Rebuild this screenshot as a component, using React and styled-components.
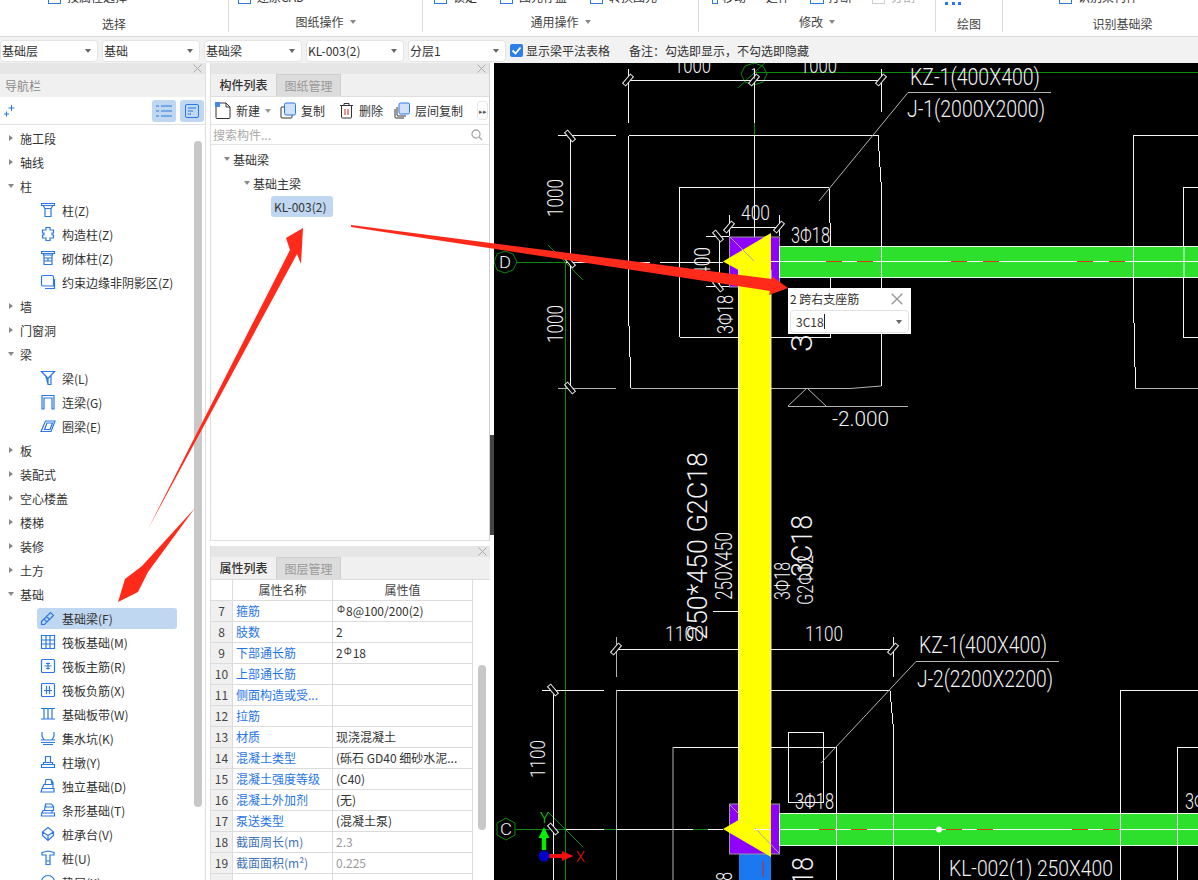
import styled, { createGlobalStyle } from 'styled-components'

const FONT = '"Noto Sans CJK SC", "Noto Sans", sans-serif'
const BLUE = '#2a78e4'

const GlobalStyle = createGlobalStyle`
  html, body {
    margin: 0;
    padding: 0;
    background: #fff;
    overflow: hidden;
  }
  * {
    box-sizing: border-box;
  }
`

/* ---------- small drawings ---------- */

const IconSvg = styled.svg`
  flex: none;
  display: block;
  fill: none;
  stroke: ${(p) => p.$color || BLUE};
  stroke-width: 1.2;
`

const NAV_ICONS = {
  column: 'M1.5 1.5h13v2h-13zM3 3.5l2 3h6l2-3M5 6.5v8h6v-8',
  structural: 'M6 1.5h4v2.5h3.5v3h-1.5v2h1.5v3H10v2.5H6V12H2.500V9H4V7H2.500V4H6z',
  masonry: 'M1.5 1.500h13v2h-13zM3.500 3.500v1.500h9V3.500M4 5v9.500h8V5M4 8h8M4 11h8M8 8v3',
  edge: 'M3 1.500h9a1.500 1.500 0 0 1 1.500 1.500v9H3A1.500 1.500 0 0 1 1.500 10.500V3A1.500 1.500 0 0 1 3 1.500zM14.500 5v9.500H5',
  beam: 'M1.500 1.500h13L8 8.500zM8 8.500v6h3V5M5.500 5l2.500 9',
  link: 'M2 15V1.500h12V15h-2V4H4v11z',
  ring: 'M5.500 3h9.500l-4 10.500H1zM7 5h5.500l-2.500 6.500H4.500z',
  found: 'M1.500 11.500L10.500 2.500l3 3-9 9h-3zM4 9l3 3M6.500 6.500l3 3',
  raft: 'M1.500 1.500h13v13h-13zM1.500 6h13M1.500 10h13M6 1.500v13M10 1.500v13',
  main: 'M2.500 1.500h11a1 1 0 0 1 1 1v11a1 1 0 0 1-1 1h-11a1 1 0 0 1-1-1v-11a1 1 0 0 1 1-1zM8 4.500v7M4.500 8h7M6 5.500h4M6 10.500h4',
  minus: 'M2.500 1.500h11a1 1 0 0 1 1 1v11a1 1 0 0 1-1 1h-11a1 1 0 0 1-1-1v-11a1 1 0 0 1 1-1zM6.500 4v8M9.500 4v8M4 8.500h8',
  strip: 'M1 2.500h14M1 13h14M4 2.500V13M8 2.500V13M12 2.500V13',
  pit: 'M2 2v4l2 4h8l2-4V2M1 12.500h14M3 14.500h10M1 10h3M12 10h3',
  pier: 'M5.500 2.500h5v6h-5zM3.500 8.500h9v2h-9zM1.500 10.500h13v3h-13z',
  isolated: 'M6 1.500h5l1 5H5zM4 6.500h9v4H2zM2 10.500h12v3.500H1zM11 1.500l2 3v2',
  stripF: 'M5.500 2h6l2 2.500v4h-9zM5.500 2v3h8M3 8.500h9v2.500H2zM1.500 11h13v3h-13z',
  cap: 'M8 1.500l5.500 4.500v3.500L8 14.500 2.500 9.500V6zM2.500 6L8 9.500 13.500 6M8 9.500v5',
  pile: 'M2 2.500L8 1l6 1.500v2.500H10v9.500H6V5H2zM6 11h4',
  cushion: 'M1.500 8a6.500 6.500 0 0 1 13 0v6h-13z'
}

function NavIcon({ name }) {
  return (
    <IconSvg width="16" height="16" viewBox="0 0 16 16">
      <path d={NAV_ICONS[name]} />
    </IconSvg>
  )
}

function Check() {
  return (
    <svg width="13" height="13" viewBox="0 0 13 13">
      <rect width="13" height="13" rx="2" fill="#2f80e6" />
      <path d="M2.500 6.500l3 3 5-6" stroke="#fff" strokeWidth="1.800" fill="none" />
    </svg>
  )
}

function NewIcon() {
  return (
    <svg width="16" height="17" viewBox="0 0 16 17" fill="none" stroke="#333">
      <path d="M1 5v10.500a1 1 0 0 0 1 1h12a1 1 0 0 0 1-1V5l-4-4H5" />
      <path d="M11 1v4h4" />
      <rect x="0" y="0" width="5" height="5" fill="#3f8ae8" stroke="none" />
    </svg>
  )
}

function CopyIcon() {
  return (
    <svg width="16" height="17" viewBox="0 0 16 17" fill="none" stroke="#333">
      <path d="M4 5H2a1 1 0 0 0-1 1v9a1 1 0 0 0 1 1h9a1 1 0 0 0 1-1v-2" />
      <rect x="4.500" y="1" width="11" height="12" rx="1.500" fill="#cfe2fa" stroke="#2a78e4" />
    </svg>
  )
}

function TrashIcon() {
  return (
    <svg width="15" height="17" viewBox="0 0 15 17" fill="none" stroke="#333">
      <path d="M1 3.500h13M5 3.500V1.500h5v2M2.500 3.500v11.500a1 1 0 0 0 1 1h8a1 1 0 0 0 1-1V3.500" />
      <path d="M6 7v6M9 7v6" stroke="#e02020" />
    </svg>
  )
}

function FloorCopyIcon() {
  return (
    <svg width="16" height="17" viewBox="0 0 16 17" fill="none" stroke="#333">
      <path d="M1 7v8a1 1 0 0 0 1 1h8M3 5v8a1 1 0 0 0 1 1h8" />
      <rect x="5" y="1" width="10.500" height="11" rx="1.500" fill="#cfe2fa" stroke="#2a78e4" />
    </svg>
  )
}

function SearchIcon() {
  return (
    <svg width="12" height="12" viewBox="0 0 12 12" fill="none" stroke="#aaa" strokeWidth="1.300">
      <circle cx="5" cy="5" r="4" />
      <path d="M8 8l3 3" />
    </svg>
  )
}

function CloseX({ size = 9, color = '#aaa' }) {
  return (
    <svg width={size} height={size} viewBox="0 0 9 9" stroke={color} fill="none">
      <path d="M0.500 0.500l8 8M8.500 0.500l-8 8" />
    </svg>
  )
}

/* ---------- ribbon ---------- */

const Ribbon = styled.div`
  display: flex;
  height: 37px;
  background: #fff;
  border-bottom: 1px solid #d9d9d9;
`

const RibbonGroup = styled.div`
  width: ${(p) => p.$w}px;
  height: 32px;
  border-right: ${(p) => (p.$last ? 'none' : '1px solid #dcdcdc')};
  display: flex;
  flex-direction: column;
`

const RibbonTop = styled.div`
  height: 5px;
  overflow: hidden;
  display: flex;
  align-items: flex-end;
  padding-left: ${(p) => p.$pad}px;
  gap: ${(p) => p.$gap || 0}px;
`

const RibbonItem = styled.div`
  display: flex;
  align-items: center;
  gap: ${(p) => (p.$tight ? 4 : 6)}px;
  font-size: 12px;
  line-height: 16px;
  color: ${(p) => (p.$off ? '#aaa' : '#333')};
  white-space: nowrap;
`

const RibbonGlyph = styled.span`
  width: ${(p) => p.$w || 13}px;
  height: 14px;
  border: 1px solid ${(p) => (p.$off ? '#ccc' : BLUE)};
  display: block;
`

const DrawDots = styled.span`
  width: 16px;
  height: 14px;
  display: block;
  border-bottom: 3px dotted ${BLUE};
`

const RibbonLabel = styled.div`
  margin-top: ${(p) => (p.$raise ? 8 : 10)}px;
  padding-left: ${(p) => p.$shift || 0}px;
  text-align: center;
  font-size: 12px;
  line-height: 17px;
  color: #444;
  display: flex;
  justify-content: center;
  align-items: center;
  gap: 6px;
`

const Caret = styled.span`
  width: 0;
  height: 0;
  border-left: 3.500px solid transparent;
  border-right: 3.500px solid transparent;
  border-top: 4px solid ${(p) => p.$color || '#888'};
  display: block;
  flex: none;
`

function RibbonBar() {
  return (
    <Ribbon>
      <RibbonGroup $w={229}>
        <RibbonTop $pad={48}>
          <RibbonItem><RibbonGlyph /><span>按属性选择</span></RibbonItem>
        </RibbonTop>
        <RibbonLabel>选择</RibbonLabel>
      </RibbonGroup>
      <RibbonGroup $w={194}>
        <RibbonTop $pad={9}>
          <RibbonItem><RibbonGlyph /><span>还原CAD</span></RibbonItem>
        </RibbonTop>
        <RibbonLabel $raise>图纸操作 <Caret /></RibbonLabel>
      </RibbonGroup>
      <RibbonGroup $w={276}>
        <RibbonTop $pad={11} $gap={23}>
          <RibbonItem><RibbonGlyph /><span>锁定</span></RibbonItem>
          <RibbonItem><RibbonGlyph /><span>图元存盘</span></RibbonItem>
          <RibbonItem><RibbonGlyph /><span>转换图元</span></RibbonItem>
        </RibbonTop>
        <RibbonLabel $raise>通用操作 <Caret /></RibbonLabel>
      </RibbonGroup>
      <RibbonGroup $w={237}>
        <RibbonTop $pad={13} $gap={20}>
          <RibbonItem $tight><RibbonGlyph $w={6} /><span>移动</span></RibbonItem>
          <RibbonItem><span>延伸</span></RibbonItem>
          <RibbonItem $tight><RibbonGlyph $w={14} /><span>打断</span></RibbonItem>
          <RibbonItem $off><RibbonGlyph $off /><span>分割</span></RibbonItem>
        </RibbonTop>
        <RibbonLabel $raise>修改 <Caret /></RibbonLabel>
      </RibbonGroup>
      <RibbonGroup $w={67}>
        <RibbonTop $pad={9}><RibbonItem><DrawDots /></RibbonItem></RibbonTop>
        <RibbonLabel>绘图</RibbonLabel>
      </RibbonGroup>
      <RibbonGroup $w={195} $last>
        <RibbonTop $pad={56}>
          <RibbonItem><RibbonGlyph /><span>识别梁构件</span></RibbonItem>
        </RibbonTop>
        <RibbonLabel $shift={44}>识别基础梁</RibbonLabel>
      </RibbonGroup>
    </Ribbon>
  )
}

/* ---------- selector toolbar ---------- */

const Selectors = styled.div`
  display: flex;
  align-items: center;
  height: 26px;
  gap: 4px;
  background: #f2f2f2;
  font-size: 12px;
  color: #333;
`

const Combo = styled.div`
  width: 98px;
  height: 22px;
  margin-top: 1px;
  background: #fff;
  border: 1px solid #e4e4e4;
  border-radius: 4px;
  padding: 0 6px 0 1px;
  display: flex;
  align-items: center;
  justify-content: space-between;
`

const ShowBeam = styled.label`
  display: flex;
  align-items: center;
  gap: 3px;
`

const Note = styled.span`
  margin-left: 15px;
`

function SelectorBar() {
  const combos = ['基础层', '基础', '基础梁', 'KL-003(2)', '分层1']
  return (
    <Selectors>
      {combos.map((c) => (
        <Combo key={c}>
          {c}
          <Caret $color="#666" />
        </Combo>
      ))}
      <ShowBeam>
        <Check />
        显示梁平法表格
      </ShowBeam>
      <Note>备注：勾选即显示，不勾选即隐藏</Note>
    </Selectors>
  )
}

/* ---------- panels ---------- */

const Body = styled.div`
  display: flex;
  height: 817px;
  font-family: ${FONT};
`

const NavPanel = styled.div`
  width: 206px;
  display: flex;
  flex-direction: column;
  border-right: 1px solid #dedede;
  overflow: hidden;
`

const PanelStrip = styled.div`
  height: 11px;
  flex: none;
  background: #e6e6e6;
  display: flex;
  justify-content: flex-end;
  align-items: center;
  padding-right: 3px;
`

const NavTitle = styled.div`
  height: 23px;
  flex: none;
  background: #f0f0f0;
  color: #8a8a8a;
  font-size: 12px;
  line-height: 23px;
  padding-left: 5px;
`

const NavTools = styled.div`
  height: 28px;
  flex: none;
  display: flex;
  align-items: center;
  gap: 4px;
  padding: 0 1px 0 4px;
  border-bottom: 1px solid #e2e2e2;
`

const ModeButton = styled.div`
  width: 24px;
  height: 22px;
  border-radius: 3px;
  background: #bfd7f0;
  display: flex;
  align-items: center;
  justify-content: center;
  margin-left: ${(p) => (p.$push ? 'auto' : 0)};
`

const NavBody = styled.div`
  flex: 1;
  min-height: 0;
  position: relative;
  padding-top: 1px;
`

const NavScroll = styled.div`
  position: absolute;
  right: 3px;
  top: 16px;
  width: 8px;
  height: 666px;
  background: #c8c8c8;
  border-radius: 4px;
`

const GroupRow = styled.div`
  height: 24px;
  display: flex;
  align-items: center;
  gap: 6px;
  padding-left: 7px;
  font-size: 12px;
  color: #333;
`

const Arrow = styled.span`
  width: 7px;
  flex: none;
  display: flex;
  justify-content: center;
`

const TriRight = styled.span`
  border-top: 3.500px solid transparent;
  border-bottom: 3.500px solid transparent;
  border-left: 4px solid #888;
  display: block;
`

const ChildRow = styled.div`
  height: 24px;
  display: flex;
  align-items: center;
`

const ChildInner = styled.div`
  width: 140px;
  height: 21px;
  margin-left: 37px;
  padding-left: 3px;
  display: flex;
  align-items: center;
  gap: 6px;
  border-radius: 3px;
  font-size: 12px;
  color: #333;
  white-space: nowrap;
  background: ${(p) => (p.$active ? '#bfd7f0' : 'transparent')};
`

const TREE = [
  { label: '施工段' },
  { label: '轴线' },
  {
    label: '柱',
    open: true,
    items: [
      ['柱(Z)', 'column'],
      ['构造柱(Z)', 'structural'],
      ['砌体柱(Z)', 'masonry'],
      ['约束边缘非阴影区(Z)', 'edge']
    ]
  },
  { label: '墙' },
  { label: '门窗洞' },
  {
    label: '梁',
    open: true,
    items: [
      ['梁(L)', 'beam'],
      ['连梁(G)', 'link'],
      ['圈梁(E)', 'ring']
    ]
  },
  { label: '板' },
  { label: '装配式' },
  { label: '空心楼盖' },
  { label: '楼梯' },
  { label: '装修' },
  { label: '土方' },
  {
    label: '基础',
    open: true,
    items: [
      ['基础梁(F)', 'found', true],
      ['筏板基础(M)', 'raft'],
      ['筏板主筋(R)', 'main'],
      ['筏板负筋(X)', 'minus'],
      ['基础板带(W)', 'strip'],
      ['集水坑(K)', 'pit'],
      ['柱墩(Y)', 'pier'],
      ['独立基础(D)', 'isolated'],
      ['条形基础(T)', 'stripF'],
      ['桩承台(V)', 'cap'],
      ['桩(U)', 'pile'],
      ['垫层(X)', 'cushion']
    ]
  }
]

function NavBar() {
  return (
    <NavPanel>
      <PanelStrip><CloseX /></PanelStrip>
      <NavTitle>导航栏</NavTitle>
      <NavTools>
        <svg width="11" height="12" viewBox="0 0 11 12" stroke={BLUE} fill="none">
          <path d="M7.500 0v6M4.500 3h6M2.500 6.500v5M0 9h5" />
        </svg>
        <ModeButton $push>
          <svg width="16" height="14" viewBox="0 0 16 14" stroke={BLUE} fill="none">
            <path d="M5 2h11M5 7h11M5 12h11M0 2h3M0 7h3M0 12h3" />
          </svg>
        </ModeButton>
        <ModeButton>
          <svg width="14" height="14" viewBox="0 0 14 14" stroke={BLUE} fill="none">
            <rect x="0.500" y="0.500" width="13" height="13" rx="1.500" />
            <path d="M3 4h8M3 7h5M3 10h3" />
          </svg>
        </ModeButton>
      </NavTools>
      <NavBody>
        <NavScroll />
        {TREE.map((g) => (
          <div key={g.label}>
            <GroupRow>
              <Arrow>{g.open ? <Caret /> : <TriRight />}</Arrow>
              {g.label}
            </GroupRow>
            {g.items &&
              g.items.map(([text, icon, active]) => (
                <ChildRow key={text}>
                  <ChildInner $active={active}>
                    <NavIcon name={icon} />
                    {text}
                  </ChildInner>
                </ChildRow>
              ))}
          </div>
        ))}
      </NavBody>
    </NavPanel>
  )
}

const Middle = styled.div`
  width: 280px;
  margin-left: 4px;
  display: flex;
  flex-direction: column;
  gap: 5px;
`

const ListPanel = styled.div`
  height: 478px;
  flex: none;
  display: flex;
  flex-direction: column;
  border: 1px solid #dedede;
  border-top: none;
  border-right-color: #d0d0d0;
`

const PropPanel = styled.div`
  flex: 1;
  min-height: 0;
  display: flex;
  flex-direction: column;
  border-left: 1px solid #dedede;
  overflow: hidden;
`

const MidStrip = styled(PanelStrip)`
  padding-right: 3px;
`

const TabRow = styled.div`
  height: 23px;
  flex: none;
  display: flex;
  background: #f0f0f0;
  border-bottom: 1px solid #dedede;
`

const Tab = styled.div`
  width: 65px;
  text-align: center;
  font-size: 12px;
  line-height: 22px;
  font-weight: ${(p) => (p.$active ? 500 : 400)};
  color: ${(p) => (p.$active ? '#333' : '#9a9a9a')};
  background: ${(p) => (p.$active ? '#f0f0f0' : '#dcdcdc')};
  border: ${(p) => (p.$active ? 'none' : '1px solid #cfcfcf')};
  border-bottom: none;
`

const ListTools = styled.div`
  height: 28px;
  flex: none;
  display: flex;
  align-items: center;
  padding-left: 4px;
  font-size: 12px;
  color: #333;
  border-bottom: 1px solid #e4e4e4;
`

const Tool = styled.div`
  display: flex;
  align-items: center;
  gap: 5px;
  margin-right: ${(p) => p.$gap}px;
`

const MoreButton = styled.div`
  width: 11px;
  height: 19px;
  margin-left: auto;
  margin-right: 1px;
  border: 1px solid #e6e6e6;
  border-radius: 3px;
  display: flex;
  align-items: center;
  justify-content: center;
  font-size: 7px;
  color: #555;
`

const SearchRow = styled.div`
  height: 20px;
  flex: none;
  display: flex;
  align-items: center;
  justify-content: space-between;
  padding: 0 6px 0 2px;
  font-size: 12px;
  color: #aaa;
  border-bottom: 1px solid #e4e4e4;
`

const ListTree = styled.div`
  padding-top: 2px;
`

const ListRow = styled.div`
  height: 24px;
  display: flex;
  align-items: center;
  gap: 3px;
  padding-left: ${(p) => p.$indent}px;
  font-size: 12px;
  color: #333;
`

const Picked = styled.div`
  margin-left: 60px;
  margin-top: 1px;
  width: 62px;
  height: 21px;
  line-height: 21px;
  padding-left: 3px;
  background: #bfd7f0;
  border-radius: 3px;
  font-size: 12px;
  color: #333;
`

const ListBody = () => (
  <ListTree>
    <ListRow $indent={13}><Caret />基础梁</ListRow>
    <ListRow $indent={33}><Caret />基础主梁</ListRow>
    <Picked>KL-003(2)</Picked>
  </ListTree>
)

/* ---------- property table ---------- */

const TableWrap = styled.div`
  flex: 1;
  min-height: 0;
  position: relative;
`

const PropTable = styled.div`
  width: 262px;
  display: grid;
  grid-template-columns: 22px 100px 140px;
  grid-auto-rows: 21px;
  font-size: 12px;
`

const HeadCell = styled.div`
  text-align: center;
  line-height: 19px;
  color: #444;
  border-right: 1px solid #dcdcdc;
  border-bottom: 1px solid #dcdcdc;
`

const NumCell = styled.div`
  background: #f0f0f0;
  text-align: center;
  line-height: 20px;
  font-size: 12px;
  color: #444;
  border-right: 1px solid #dcdcdc;
  border-bottom: 1px solid #dcdcdc;
`

const NameCell = styled.div`
  padding-left: 3px;
  line-height: 20px;
  color: ${(p) => (p.$dim ? '#3f74b8' : '#1f74e8')};
  white-space: nowrap;
  border-right: 1px solid #dcdcdc;
  border-bottom: 1px solid #dcdcdc;
`

const ValueCell = styled.div`
  padding-left: 3px;
  line-height: 20px;
  color: ${(p) => (p.$dim ? '#9a9a9a' : '#333')};
  white-space: nowrap;
  border-right: 1px solid #dcdcdc;
  border-bottom: 1px solid #dcdcdc;
`

const Rebar = styled.span`
  font-size: 10px;
  position: relative;
  top: -3px;
  margin: 0 1px;
`

const PropScroll = styled.div`
  position: absolute;
  left: 267px;
  top: 85px;
  width: 8px;
  height: 165px;
  border-radius: 4px;
  background: #c8c8c8;
`

const ROWS = [
  [7, '箍筋', <><Rebar>Φ</Rebar>8@100/200(2)</>],
  [8, '肢数', '2'],
  [9, '下部通长筋', <>2<Rebar>Φ</Rebar>18</>],
  [10, '上部通长筋', ''],
  [11, '侧面构造或受...', ''],
  [12, '拉筋', ''],
  [13, '材质', '现浇混凝土'],
  [14, '混凝土类型', '(砾石 GD40 细砂水泥...'],
  [15, '混凝土强度等级', '(C40)'],
  [16, '混凝土外加剂', '(无)'],
  [17, '泵送类型', '(混凝土泵)'],
  [18, '截面周长(m)', '2.3', true],
  [19, '截面面积(m²)', '0.225', true],
  [20, '', '']
]

function PropertyPanel() {
  return (
    <PropPanel>
      <MidStrip><CloseX /></MidStrip>
      <TabRow>
        <Tab $active>属性列表</Tab>
        <Tab>图层管理</Tab>
      </TabRow>
      <TableWrap>
        <PropTable>
          <HeadCell />
          <HeadCell>属性名称</HeadCell>
          <HeadCell>属性值</HeadCell>
          {ROWS.map(([n, name, value, dim]) => (
            <div key={n} style={{ display: 'contents' }}>
              <NumCell>{n !== 20 ? n : ''}</NumCell>
              <NameCell $dim={dim}>{name}</NameCell>
              <ValueCell $dim={dim}>{value}</ValueCell>
            </div>
          ))}
        </PropTable>
        <PropScroll />
      </TableWrap>
    </PropPanel>
  )
}

/* ---------- CAD canvas ---------- */

const Gutter = styled.div`
  width: 4px;
  flex: none;
  padding-top: 372px;
`

const GutterHandle = styled.div`
  width: 4px;
  height: 100px;
  background: #444;
`

const Canvas = styled.div`
  flex: 1;
  position: relative;
  background: #000;
  overflow: hidden;
`

const CadSvg = styled.svg`
  display: block;
`

const CadText = styled.text`
  fill: #f2f2f2;
  font-family: Roboto, "Liberation Sans", sans-serif;
  font-weight: 300;
`

const Popup = styled.div`
  position: absolute;
  left: 294px;
  top: 225px;
  width: 123px;
  height: 46px;
  background: #fff;
  padding: 1px 2px;
  font-size: 12px;
  color: #333;
`

const PopupHead = styled.div`
  height: 19px;
  display: flex;
  align-items: center;
  justify-content: space-between;
  padding: 0 6px 0 0;
  line-height: 19px;
`

const PopupSelect = styled.div`
  height: 23px;
  margin-top: 2px;
  border: 1px solid #e2e2e2;
  border-radius: 4px;
  padding: 0 6px 0 5px;
  display: flex;
  align-items: center;
  justify-content: space-between;
`

const CursorText = styled.span`
  border-right: 1px solid #222;
  padding-right: 0;
  line-height: 15px;
`

function T({ x, y, len, size, rot, fill, children }) {
  return (
    <CadText
      x={x}
      y={y}
      fontSize={size}
      textLength={len}
      lengthAdjust="spacingAndGlyphs"
      transform={rot ? `rotate(-90 ${x} ${y})` : undefined}
      style={fill ? { fill } : undefined}
    >
      {children}
    </CadText>
  )
}

function DimTick({ x, y, back }) {
  return (
    <rect
      x={x - 2}
      y={y - 6}
      width="4"
      height="12"
      fill="#000"
      stroke="#eee"
      transform={`rotate(${back ? -40 : 40} ${x} ${y})`}
    />
  )
}

const TICKS = [
  [628, 80], [754, 80], [881, 80],
  [570, 136, true], [570, 262, true], [570, 388, true],
  [729, 227], [779, 227], [718, 236, true], [718, 286, true],
  [616, 649], [893, 649],
  [553, 690, true], [553, 829, true]
]

const WHITE_LINES = `
  M628.500 80.500H881.500 M628.500 69V123 M754.500 69V123 M754.500 135V262 M881.500 69V112
  M628.500 135.500H878L881.500 190V386 M628.500 135.500V310L631 388
  M570.500 135V388 M558 135.500H616
  M679.500 187.500H829L830.500 240V337.500H680 M679.500 187V337
  M729 227.500H780 M729.500 215V236 M779.500 215V236
  M719.500 236V286 M706 236.500H729 M706 286.500H729
  M566 262.500H650 M660 262.500H723 M748 261.500H771
  M713 611.500H738
  M1198 135.500H1133.500V300L1135.500 388 M1198 187.500H1183.500V337.500H1198
  M616 649.500H893 M893.500 637V677
  M542 690.500H604 M553.500 690V880
  M616 690.500H890L893.500 730V880
  M673 747.500H836.500V880 M788.500 732.500H823.500V802.500H788.500Z
  M1120.500 690.500H1198 M1120.500 690V880 M1177.500 747.500H1198 M1177.500 747V880
  M939.500 829V880
  M566 829.500H604 M616 829.500H693 M708 829.500H723
  M754.500 845V880
`

const GRAY_LINES = `
  M558 388.500H616 M631 388.500H850L881 386
  M1135 388.500H1198
  M819 201L908 92.500H1051
  M616.500 637V677 M616.500 690V880 M673 747V880
  M821 763L916 661.500H1059
  M788 406.500H908 M788 406L807 388L826 406
`

const DASHES_TOP = [826, 857, 951, 983, 1077, 1109]
const DASHES_BOTTOM = [819, 851, 946, 977, 1072, 1103]

function Drawing() {
  return (
    <CadSvg width="704" height="817" viewBox="494 63 704 817">
      {/* axis lines */}
      <g stroke="#0b8a0b" fill="none">
        <path d="M754 72.500H1198 M565.500 262V880 M516 262.500H566 M516 829.500H723 M754.500 123V135" />
        <path d="M548 245L583 280 M548 812L583 847 M738 88L770 58" />
        <polygon points="505,251 513,254 517,262 513,270 505,273 497,270 494,262 497,254" />
        <polygon points="506,818 515,823 515,835 506,840 497,835 497,823" />
        <polygon points="754,63 763,66 767,74 763,82 754,85 745,82 741,74 745,66" />
      </g>
      <path d={WHITE_LINES} stroke="#f4f4f4" fill="none" shapeRendering="crispEdges" />
      <path d={GRAY_LINES} stroke="#b4b4b4" fill="none" />

      {/* columns and beams */}
      <rect x="739" y="854" width="32" height="26" fill="#1a78f0" />
      <path d="M763 861V877" stroke="#d02020" />
      <rect x="729.500" y="237" width="50" height="50" fill="#8f00ff" stroke="#9a9a9a" />
      <rect x="729.500" y="804" width="50" height="50" fill="#8f00ff" stroke="#9a9a9a" />
      <polygon
        points="723,261.500 771,233 771,857 723,829 738.500,820 738.500,270"
        fill="#ffff00"
      />
      <path d="M738.500 270V820 M771 270V800" stroke="#eee" />
      <path d="M730 237L754 261 M755 828L779 853 M730 805L739 814" stroke="#aaa" />
      <rect x="779.500" y="246.500" width="419" height="31" fill="#2ce02c" stroke="#e8ffe8" />
      <rect x="779.500" y="813.500" width="419" height="32" fill="#2ce02c" stroke="#e8ffe8" />
      <path d="M771 261.500H1198 M779 829.500H1198" stroke="#f4f4f4" />
      <path d="M754 829.500H771" stroke="#f4f4f4" />
      <path d="M836.500 813V846 M893.500 813V846 M1120.500 813V846 M1177.500 813V846 M881.500 246V278 M1133.500 246V278 M1184 246V278"
        stroke="#f0f0f0" />
      {DASHES_TOP.map((x) => (
        <path key={x} d={`M${x} 261.500h16`} stroke="#d83a10" />
      ))}
      {DASHES_BOTTOM.map((x) => (
        <path key={x} d={`M${x} 829.500h16`} stroke="#d83a10" />
      ))}
      <circle cx="939" cy="829.500" r="3" fill="#fff" />
      {TICKS.map(([x, y, back]) => (
        <DimTick key={`${x}-${y}`} x={x} y={y} back={back} />
      ))}

      {/* labels */}
      <T x={674} y={73} len={37} size={22}>1000</T>
      <T x={800} y={73} len={37} size={22}>1000</T>
      <T x={910} y={85} len={130} size={24}>KZ-1(400X400)</T>
      <T x={907} y={117} len={138} size={24}>J-1(2000X2000)</T>
      <T x={741} y={220} len={29} size={21}>400</T>
      <T x={791} y={243} len={39} size={22}>3Φ18</T>
      <T x={563} y={217} len={38} size={22} rot>1000</T>
      <T x={563} y={343} len={38} size={22} rot>1000</T>
      <T x={710} y={276} len={29} size={22} rot>400</T>
      <T x={733} y={334} len={39} size={22} rot>3Φ18</T>
      <T x={812} y={352} len={18} size={29} rot>3</T>
      <T x={832} y={426} len={57} size={21}>-2.000</T>
      <T x={707} y={640} len={188} size={28} rot>250*450 G2C18</T>
      <T x={732} y={600} len={68} size={23} rot>250X450</T>
      <T x={790} y={600} len={38} size={22} rot>3Φ18</T>
      <T x={813} y={605} len={50} size={22} rot>G2Φ12</T>
      <T x={812} y={577} len={62} size={29} rot>3C18</T>
      <T x={665} y={641} len={39} size={21}>1100</T>
      <T x={805} y={641} len={38} size={21}>1100</T>
      <T x={919} y={653} len={128} size={24}>KZ-1(400X400)</T>
      <T x={917} y={687} len={136} size={24}>J-2(2200X2200)</T>
      <T x={545} y={778} len={38} size={21} rot>1100</T>
      <T x={795} y={809} len={39} size={22}>3Φ18</T>
      <T x={1185} y={809} len={39} size={22}>3Φ18</T>
      <T x={813} y={885} len={28} size={29} rot>18</T>
      <T x={732} y={910} len={38} size={22} rot>3Φ18</T>
      <T x={949} y={876} len={164} size={22}>KL-002(1) 250X400</T>
      <T x={499} y={268} len={12} size={17}>D</T>
      <T x={500} y={835} len={12} size={17}>C</T>
      <T x={751} y={79} len={6} size={15}>1</T>

      {/* axis gizmo */}
      <path d="M544 827L549.500 838H546.200V850H541.800V838H538.500Z" fill="#00f000" />
      <path d="M548 854H562V851L573.500 856L562 861V858H548Z" fill="#f01010" />
      <circle cx="544" cy="856" r="5.500" fill="#0000c8" />
      <T x={540} y={823} len={9} size={14} fill="#10e010">Y</T>
      <T x={576} y={862} len={9} size={14} fill="#f01010">X</T>
    </CadSvg>
  )
}

/* ---------- red annotation arrows over the page ---------- */

const Marks = styled.svg`
  position: absolute;
  left: 0;
  top: 0;
  pointer-events: none;
`

function RedArrows() {
  return (
    <Marks width="1198" height="880" viewBox="0 0 1198 880">
      <g fill="#ff2a1a">
        <polygon points="351,225 771,279 773,277 788,288 769,295 770,291 351,227" />
        <polygon points="148,529 290,250 286,238 303,228 301,264 297,254" />
        <polygon points="195,508 148,572 138,592 118,602 125,579 142,566" />
      </g>
    </Marks>
  )
}

const Page = styled.div`
  position: relative;
  width: 1198px;
  height: 880px;
  overflow: hidden;
  background: #fff;
  font-family: ${FONT};
`

export default function App() {
  return (
    <Page>
      <GlobalStyle />
      <RibbonBar />
      <SelectorBar />
      <Body>
        <NavBar />
        <Middle>
          <ListPanel>
            <MidStrip><CloseX /></MidStrip>
            <TabRow>
              <Tab $active>构件列表</Tab>
              <Tab>图纸管理</Tab>
            </TabRow>
            <ListTools>
              <Tool $gap={9}><NewIcon />新建<Caret $color="#999" /></Tool>
              <Tool $gap={14}><CopyIcon />复制</Tool>
              <Tool $gap={11}><TrashIcon />删除</Tool>
              <Tool $gap={0}><FloorCopyIcon />层间复制</Tool>
              <MoreButton>▸▸</MoreButton>
            </ListTools>
            <SearchRow>
              搜索构件...
              <SearchIcon />
            </SearchRow>
            <ListBody />
          </ListPanel>
          <PropertyPanel />
        </Middle>
        <Gutter><GutterHandle /></Gutter>
        <Canvas>
          <Drawing />
          <Popup>
            <PopupHead>
              2 跨右支座筋
              <CloseX size={12} color="#999" />
            </PopupHead>
            <PopupSelect>
              <CursorText>3C18</CursorText>
              <Caret $color="#666" />
            </PopupSelect>
          </Popup>
        </Canvas>
      </Body>
      <RedArrows />
    </Page>
  )
}
